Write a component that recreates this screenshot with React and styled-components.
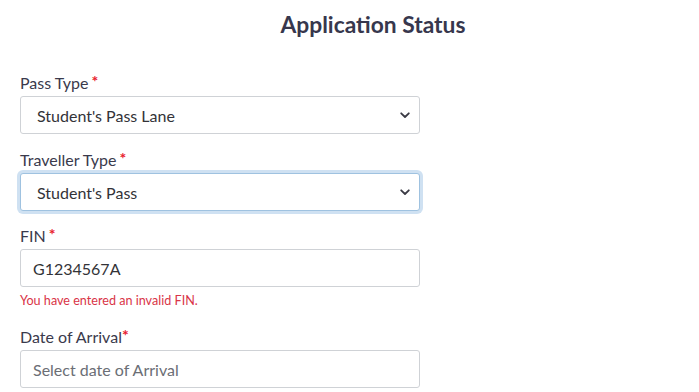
import React from "react";
import styled, { createGlobalStyle } from "styled-components";

const Global = createGlobalStyle`
  html, body { margin: 0; padding: 0; background: #ffffff; }
  body { font-family: Lato, "Open Sans", Arial, sans-serif; color: #3b3b4f; }
`;

const Page = styled.div`
  width: 699px;
  height: 392px;
  overflow: hidden;
  box-sizing: border-box;
  padding: 10px 0 0 20px;
`;

const Title = styled.h1`
  margin: 0;
  font-size: 22.8px;
  line-height: 28px;
  font-weight: 700;
  color: #37374d;
  text-align: center;
  width: 706px;
  white-space: nowrap;
`;

const Form = styled.div`
  width: 400px;
  display: flex;
  flex-direction: column;
  margin-top: 35px;
`;

const Field = styled.div`
  display: flex;
  flex-direction: column;
  gap: 3px;
  margin-bottom: ${(p) => p.$mb ?? 16}px;
`;

const Label = styled.div`
  font-size: 16px;
  line-height: 20px;
  color: #3a3a4c;
`;

const Req = styled.span`
  color: #e8202c;
  font-size: 16px;
  font-weight: 700;
  margin-left: ${(p) => (p.$tight ? 0 : 3)}px;
  position: relative;
  top: -2px;
`;

const Box = styled.div`
  box-sizing: border-box;
  height: 38px;
  border: 1px solid ${(p) => (p.$focus ? "#9fc2e0" : "#cfd2d6")};
  border-radius: 3px;
  background: #fff;
  display: flex;
  align-items: center;
  justify-content: space-between;
  padding: 0 ${(p) => (p.$select ? 9 : 12)}px 0 ${(p) => (p.$select ? 16 : 12)}px;
  box-shadow: ${(p) => (p.$focus ? "0 0 0 3px #cfe1f2" : "none")};
  font-size: 16px;
  color: ${(p) => (p.$placeholder ? "#6b6e75" : "#333338")};
`;

const Chevron = () => (
  <svg width="10" height="7" viewBox="0 0 10 7">
    <path d="M1.2 1.3 L5 5 L8.8 1.3" fill="none" stroke="#3a3a44" strokeWidth="1.8" strokeLinecap="round" strokeLinejoin="round" />
  </svg>
);

const Error = styled.div`
  font-size: 12.6px;
  line-height: 16px;
  color: #d93447;
  margin-top: 3px;
`;

export default function App() {
  return (
    <Page>
      <Global />
      <Title>Application Status</Title>
      <Form>
        <Field>
          <Label>Pass Type<Req>*</Req></Label>
          <Box $select>
            <span>Student's Pass Lane</span>
            <Chevron />
          </Box>
        </Field>
        <Field $mb={15}>
          <Label>Traveller Type<Req>*</Req></Label>
          <Box $select $focus>
            <span>Student's Pass</span>
            <Chevron />
          </Box>
        </Field>
        <Field $mb={18}>
          <Label>FIN<Req>*</Req></Label>
          <Box>G1234567A</Box>
          <Error>You have entered an invalid FIN.</Error>
        </Field>
        <Field>
          <Label>Date of Arrival<Req $tight>*</Req></Label>
          <Box $placeholder>Select date of Arrival</Box>
        </Field>
      </Form>
    </Page>
  );
}
